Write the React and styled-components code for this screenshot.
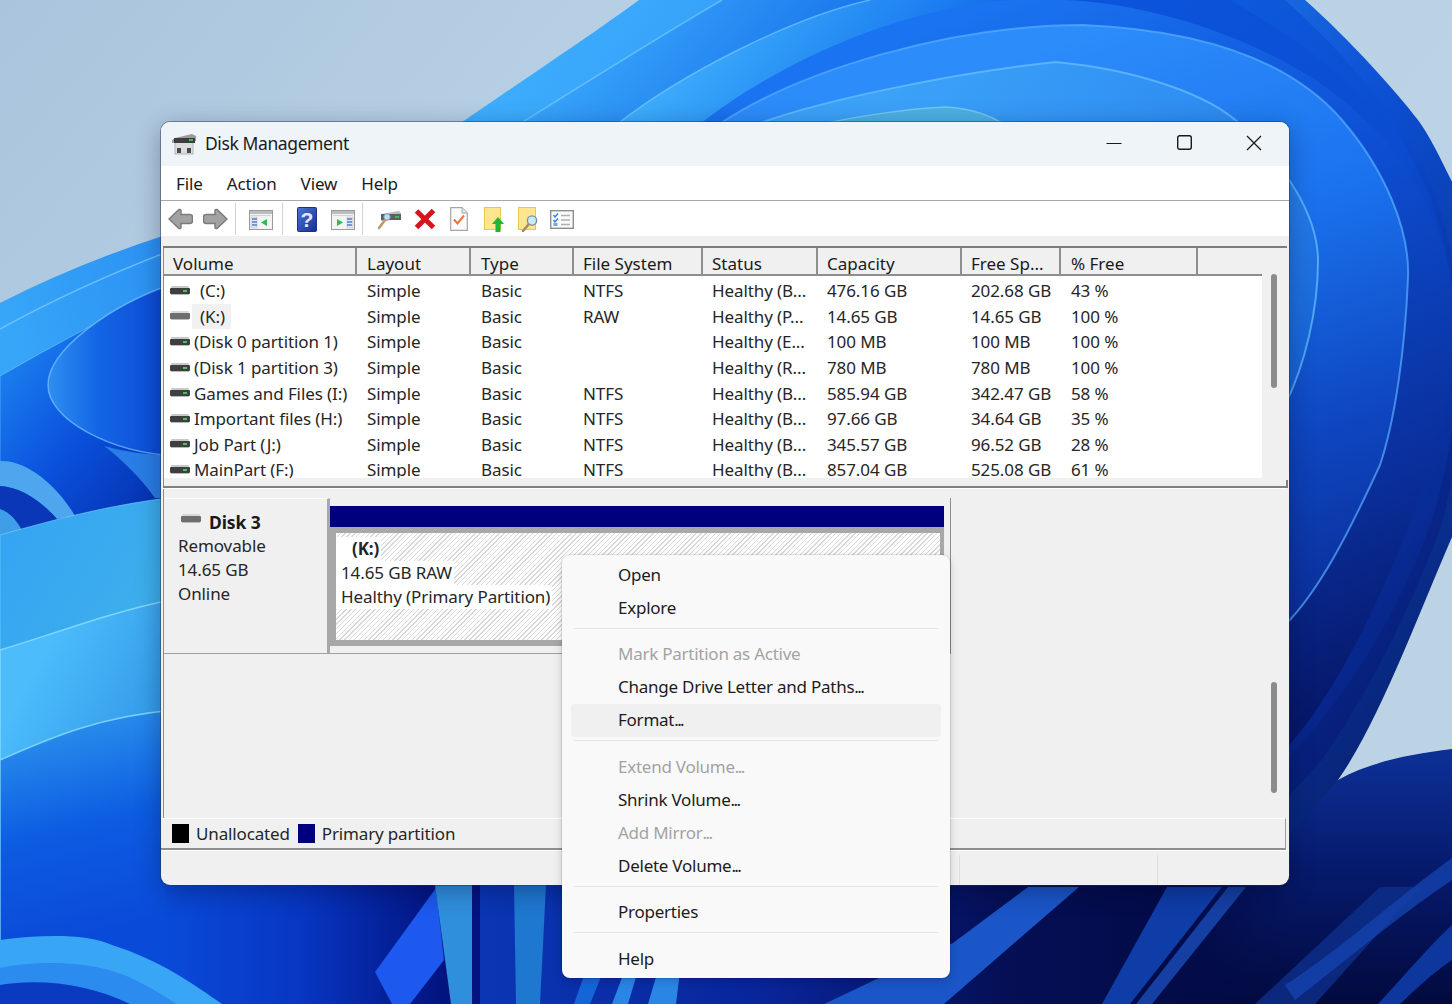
import React from 'react';
import styled, { createGlobalStyle } from 'styled-components';

const UI_FONT = '"Noto Sans", "Open Sans", sans-serif';

const GlobalStyle = createGlobalStyle`
  html, body { margin: 0; padding: 0; background: #b5cde0; }
  body { font-family: ${UI_FONT}; color: #1a1a1a; overflow: hidden; }
`;

const Desktop = styled.div`
  position: relative;
  width: 1452px;
  height: 1004px;
  overflow: hidden;
`;

const WallpaperSvg = styled.svg`
  position: absolute;
  left: 0;
  top: 0;
`;

const Window = styled.div`
  position: absolute;
  left: 161px;
  top: 122px;
  width: 1128px;
  height: 763px;
  display: flex;
  flex-direction: column;
  background: #f0f0f0;
  border-radius: 9px;
  overflow: hidden;
  box-shadow: 0 0 0 1px rgba(40, 50, 70, 0.45), 0 6px 26px rgba(0, 0, 30, 0.32);
  font-size: 17px;
`;

const TitleBar = styled.div`
  height: 41px;
  padding: 0 0 3px 11px;
  flex: none;
  display: flex;
  align-items: center;
  background: #eff4f9;

  > svg {
    margin-top: 2px;
  }
`;

const TitleText = styled.span`
  margin-left: 9px;
  font-size: 17.5px;
  letter-spacing: -0.4px;
  color: #1b1b1b;
`;

const WinButtons = styled.div`
  margin-left: auto;
  display: flex;
`;

const WinButton = styled.div`
  width: 70px;
  height: 41px;
  display: flex;
  align-items: center;
  justify-content: center;
`;

const MenuBar = styled.div`
  height: 34px;
  flex: none;
  display: flex;
  align-items: center;
  background: #fff;
  border-bottom: 1px solid #a8a8a8;
  padding-left: 15px;
  gap: 24px;
`;

const MenuLabel = styled.span`
  font-size: 17px;
  letter-spacing: -0.1px;
`;

const Toolbar = styled.div`
  height: 34px;
  padding-top: 1px;
  flex: none;
  display: flex;
  align-items: center;
  background: #fff;
`;

const ToolSlot = styled.div`
  flex: none;
  display: flex;
  margin-left: ${({ $ml }) => $ml}px;
  margin-top: ${({ $mt }) => $mt || 0}px;
`;

const ToolSep = styled.div`
  flex: none;
  width: 1px;
  height: 32px;
  margin-left: ${({ $ml }) => $ml}px;
  background: #d2d2d2;
`;

const ToolGap = styled.div`
  height: 10px;
  flex: none;
`;

const VolumePane = styled.div`
  height: 240px;
  flex: none;
  display: flex;
  margin-left: 2px;
  margin-right: 2px;
  border-top: 2px solid #7d7d7d;
  box-sizing: border-box;
`;

const VolumeMain = styled.div`
  width: 1099px;
  flex: none;
  border-left: 1px solid #8c8c8c;
  box-sizing: border-box;
`;

const TableHead = styled.div`
  height: 28px;
  display: grid;
  grid-template-columns: 193px 114px 103px 129px 115px 144px 99px 137px 1fr;
  border-bottom: 2px solid #8e8e8e;
  box-sizing: border-box;
`;

const HeadCell = styled.div`
  display: flex;
  align-items: flex-end;
  padding-left: ${({ $pad }) => $pad}px;
  box-sizing: border-box;
  border-right: ${({ $last }) => ($last ? 'none' : '2px solid #8e8e8e')};
  font-size: 17px;
  line-height: 20px;
  overflow: hidden;
  white-space: nowrap;
`;

const TableBody = styled.div`
  height: 202px;
  background: #fff;
  overflow: hidden;
  padding-top: 2px;
  box-sizing: border-box;
`;

const TableRow = styled.div`
  height: 25.6px;
  display: grid;
  grid-template-columns: 193px 114px 103px 129px 115px 144px 99px 137px 1fr;
  align-items: center;
`;

const Cell = styled.div`
  padding-left: ${({ $pad }) => $pad}px;
  white-space: nowrap;
  overflow: hidden;
  font-size: 17px;
  letter-spacing: -0.1px;
  color: #262626;
`;

const VolumeCell = styled.div`
  display: flex;
  align-items: center;
  padding-left: 6px;
  white-space: nowrap;
  font-size: 17px;
  letter-spacing: -0.1px;
  color: #262626;
`;

const VolumeName = styled.span`
  padding: 0 6px 0 ${({ $hl }) => ($hl ? 8 : 0)}px;
  margin-left: ${({ $hl, $gap }) => ($hl ? $gap - 8 : $gap)}px;
  background: ${({ $hl }) => ($hl ? '#f1f1f1' : 'transparent')};
  line-height: 25px;
`;

const ScrollTrack = styled.div`
  flex: 1;
  padding-left: 9px;
`;

const ScrollThumb = styled.div`
  width: 6px;
  height: ${({ $h }) => $h}px;
  margin-top: ${({ $top }) => $top}px;
  border-radius: 3px;
  background: #8b8b8b;
`;

const Splitter = styled.div`
  position: relative;
  height: 3px;
  flex: none;
  margin: 0 2px;
  background: #808080;
  border-bottom: 1px solid #fff;
  box-sizing: border-box;

  &::after {
    content: '';
    position: absolute;
    right: -1px;
    bottom: 0;
    width: 2px;
    height: 8px;
    background: #808080;
  }
`;

const DiskPane = styled.div`
  flex: 1;
  display: flex;
  margin: 0 2px;
  min-height: 0;
  border-left: 1px solid #8c8c8c;
`;

const DiskMain = styled.div`
  width: 1098px;
  flex: none;
  padding-top: 9px;
  box-sizing: border-box;
`;

const DiskRow = styled.div`
  width: 787px;
  height: 156px;
  display: flex;
  border-right: 1.5px solid #8c8c8c;
  border-bottom: 1.5px solid #a0a0a0;
  box-sizing: border-box;
`;

const DiskInfo = styled.div`
  width: 166px;
  flex: none;
  box-sizing: border-box;
  padding: 12px 0 0 14px;
  border-top: 1px solid #fff;
  border-right: 3px solid #a8a8a8;
  line-height: 24px;
  font-size: 17px;
  letter-spacing: -0.1px;
  color: #262626;
`;

const DiskTitle = styled.div`
  display: flex;
  align-items: center;
  height: 21px;
  padding: 0 0 2px 3px;
  font-weight: 700;
  font-size: 17.5px;
  gap: 8px;
  color: #1a1a1a;

  svg {
    margin-top: -6px;
  }
`;

const Partition = styled.div`
  width: 614px;
  padding-top: 8px;
`;

const PartitionBar = styled.div`
  height: 21px;
  background: #00007f;
`;

const PartitionFrame = styled.div`
  height: 119px;
  box-sizing: border-box;
  background: #a8a8a8;
  padding: 6px 4px 6px 6px;
`;

const Hatch = styled.div`
  height: 100%;
  box-sizing: border-box;
  padding-top: 4px;
  background: repeating-linear-gradient(-45deg, #fff 0 2.4px, #d8d8d8 2.4px 3.4px);
  line-height: 24px;
  font-size: 17px;
  letter-spacing: -0.1px;
  color: #262626;
`;

const HatchLine = styled.div`
  display: table;
  background: #fff;
  padding: 0 2px 0 ${({ $bold }) => ($bold ? 16 : 5)}px;
  font-weight: ${({ $bold }) => ($bold ? 700 : 400)};
`;

const LegendBar = styled.div`
  height: 32px;
  flex: none;
  display: flex;
  align-items: center;
  margin-right: 3px;
  padding-left: 11px;
  border-top: 1px solid #fff;
  border-bottom: 2px solid #8e8e8e;
  border-right: 1px solid #a0a0a0;
  box-sizing: border-box;
  font-size: 17px;
  letter-spacing: -0.15px;
`;

const Swatch = styled.span`
  width: 17px;
  height: 19px;
  flex: none;
  background: ${({ $color }) => $color};
  margin-right: 7px;
`;

const LegendLabel = styled.span`
  margin-right: 8px;
  color: #262626;
`;

const StatusBar = styled.div`
  height: 35px;
  flex: none;
  display: flex;
  border-top: 1px solid #fff;
  box-sizing: border-box;
`;

const StatusCell = styled.div`
  width: ${({ $w }) => $w}px;
  flex: none;
  box-sizing: border-box;
  margin-top: 4px;
  border-right: 1px solid #dedede;
`;

const ContextMenu = styled.div`
  position: absolute;
  left: 562px;
  top: 555px;
  width: 388px;
  height: 423px;
  box-sizing: border-box;
  padding: 3.5px 9px;
  background: #f9f9f9;
  border-radius: 8px;
  box-shadow: 0 0 0 1px rgba(0, 0, 0, 0.08), 0 3px 10px rgba(0, 0, 0, 0.18);
`;

const MenuItem = styled.div`
  height: 33px;
  box-sizing: border-box;
  padding: 0 0 2px 47px;
  display: flex;
  align-items: center;
  font-size: 17px;
  letter-spacing: -0.25px;
  border-radius: 4px;
  color: ${({ $disabled }) => ($disabled ? '#a3a3a3' : '#1c1c1c')};
  background: ${({ $active }) => ($active ? '#f0f0f0' : 'transparent')};
`;

const Dots = styled.span`
  letter-spacing: -1.6px;
`;

const MenuDivider = styled.div`
  height: 1px;
  margin: 3.25px 3px 9.25px;
  background: #e4e4e4;
`;

function Wallpaper() {
  return (
    <WallpaperSvg width="1452" height="1004" viewBox="0 0 1452 1004">
      <defs>
        <linearGradient id="sky" x1="0" y1="0" x2="1" y2="0.6">
          <stop offset="0" stopColor="#a9c4dc" />
          <stop offset="0.4" stopColor="#bad2e6" />
          <stop offset="1" stopColor="#bcd3e6" />
        </linearGradient>
        <linearGradient id="blob" gradientUnits="userSpaceOnUse" x1="1380" y1="760" x2="1380" y2="1004">
          <stop offset="0" stopColor="#0c2f94" />
          <stop offset="0.45" stopColor="#061a6c" />
          <stop offset="1" stopColor="#020a3e" />
        </linearGradient>
        <linearGradient id="outer" gradientUnits="userSpaceOnUse" x1="520" y1="60" x2="1420" y2="760">
          <stop offset="0" stopColor="#3dadfc" />
          <stop offset="0.3" stopColor="#2a8ef6" />
          <stop offset="0.62" stopColor="#0c4fd2" />
          <stop offset="1" stopColor="#07206f" />
        </linearGradient>
        <linearGradient id="bandA" gradientUnits="userSpaceOnUse" x1="560" y1="80" x2="1400" y2="800">
          <stop offset="0" stopColor="#37a4fa" />
          <stop offset="0.22" stopColor="#1068e8" />
          <stop offset="0.6" stopColor="#0b4cd0" />
          <stop offset="0.82" stopColor="#08288f" />
          <stop offset="1" stopColor="#06186a" />
        </linearGradient>
        <linearGradient id="bandB" gradientUnits="userSpaceOnUse" x1="680" y1="60" x2="1520" y2="780">
          <stop offset="0" stopColor="#3dacfb" />
          <stop offset="0.15" stopColor="#1a7cf0" />
          <stop offset="0.24" stopColor="#0b55dc" />
          <stop offset="0.55" stopColor="#0b4cd0" />
          <stop offset="0.8" stopColor="#08288f" />
          <stop offset="1" stopColor="#06186a" />
        </linearGradient>
        <linearGradient id="bandC" gradientUnits="userSpaceOnUse" x1="1000" y1="0" x2="1300" y2="720">
          <stop offset="0" stopColor="#1a73f0" />
          <stop offset="0.35" stopColor="#0d4fd4" />
          <stop offset="0.75" stopColor="#0a2f9c" />
          <stop offset="1" stopColor="#06186a" />
        </linearGradient>
        <linearGradient id="bandD" gradientUnits="userSpaceOnUse" x1="1100" y1="30" x2="1300" y2="640">
          <stop offset="0" stopColor="#2c8cfa" />
          <stop offset="0.35" stopColor="#1b72ee" />
          <stop offset="0.7" stopColor="#0e46c0" />
          <stop offset="1" stopColor="#0a2c96" />
        </linearGradient>
        <linearGradient id="bandE" gradientUnits="userSpaceOnUse" x1="900" y1="80" x2="1300" y2="380">
          <stop offset="0" stopColor="#3ba2f8" />
          <stop offset="0.7" stopColor="#2a86f0" />
          <stop offset="1" stopColor="#1763d8" />
        </linearGradient>
        <linearGradient id="sheetTop" gradientUnits="userSpaceOnUse" x1="0" y1="300" x2="170" y2="260">
          <stop offset="0" stopColor="#37a6f8" />
          <stop offset="1" stopColor="#2b90f2" />
        </linearGradient>
        <linearGradient id="valley" gradientUnits="userSpaceOnUse" x1="0" y1="360" x2="170" y2="500">
          <stop offset="0" stopColor="#1c82f0" />
          <stop offset="0.5" stopColor="#0a50dc" />
          <stop offset="1" stopColor="#0430ac" />
        </linearGradient>
        <linearGradient id="lobe" gradientUnits="userSpaceOnUse" x1="48" y1="380" x2="170" y2="380">
          <stop offset="0" stopColor="#2f8ff0" />
          <stop offset="0.4" stopColor="#1466e6" />
          <stop offset="1" stopColor="#0a47d2" />
        </linearGradient>
        <linearGradient id="sheetL1" gradientUnits="userSpaceOnUse" x1="0" y1="520" x2="170" y2="620">
          <stop offset="0" stopColor="#34a4f4" />
          <stop offset="1" stopColor="#3fb0ea" />
        </linearGradient>
        <linearGradient id="sheetL2" gradientUnits="userSpaceOnUse" x1="40" y1="660" x2="170" y2="730">
          <stop offset="0" stopColor="#4cbcfb" />
          <stop offset="1" stopColor="#2f96e6" />
        </linearGradient>
        <linearGradient id="sheetL3" gradientUnits="userSpaceOnUse" x1="60" y1="720" x2="110" y2="930">
          <stop offset="0" stopColor="#2a90ec" />
          <stop offset="0.5" stopColor="#0d5ce2" />
          <stop offset="1" stopColor="#0a4ad8" />
        </linearGradient>
        <linearGradient id="lowerLeft" gradientUnits="userSpaceOnUse" x1="165" y1="0" x2="440" y2="0">
          <stop offset="0" stopColor="#0a4ad8" />
          <stop offset="0.5" stopColor="#0736c2" />
          <stop offset="1" stopColor="#031480" />
        </linearGradient>
        <linearGradient id="navy" gradientUnits="userSpaceOnUse" x1="480" y1="0" x2="1290" y2="0">
          <stop offset="0" stopColor="#0a36b4" />
          <stop offset="0.35" stopColor="#08259a" />
          <stop offset="0.65" stopColor="#050f55" />
          <stop offset="0.85" stopColor="#030b48" />
          <stop offset="1" stopColor="#030b48" stopOpacity="0" />
        </linearGradient>
      </defs>

      <rect width="1452" height="1004" fill="url(#sky)" />
      <path d="M1452 749 C1410 754 1370 762 1338 780 L1180 880 L1000 880 L1000 1004 L1452 1004 Z" fill="url(#blob)" />

      {/* bloom petals, back to front */}
      <path d="M300 500 L458 125 C520 82 590 36 639 0 L1305 0 C1350 40 1395 90 1418 120 C1440 150 1452 190 1500 270 C1500 400 1480 470 1452 537 C1420 610 1380 720 1338 780 L1250 880 L300 880 Z" fill="url(#outer)" />
      <path d="M320 500 L518 125 C590 80 660 36 722 0 L1285 0 C1330 40 1370 85 1398 125 C1470 220 1478 400 1440 530 C1405 620 1370 690 1322 760 L1220 870 L320 870 Z" fill="url(#bandA)" />
      <path d="M518 125 C590 80 660 36 722 0" fill="none" stroke="#7ed0ff" strokeOpacity="0.6" strokeWidth="1.5" />
      <path d="M420 500 L616 125 C680 75 790 18 870 0 L1230 0 C1300 40 1350 80 1390 125 C1470 230 1470 400 1432 520 C1400 610 1350 690 1300 745 L1200 850 L420 850 Z" fill="url(#bandB)" />
      <path d="M616 125 C680 75 790 18 870 0" fill="none" stroke="#7ed0ff" strokeOpacity="0.6" strokeWidth="1.5" />
      <path d="M620 500 L699 125 C780 60 930 -10 1065 0 C1180 5 1310 60 1370 125 C1440 190 1470 300 1448 400 C1420 520 1350 680 1285 750 L1150 850 L620 850 Z" fill="url(#bandC)" />
      <path d="M650 500 L718 125 C800 70 950 25 1083 25 C1200 30 1290 60 1342 120 C1385 170 1410 230 1408 278 C1405 350 1395 420 1380 465 C1350 530 1320 590 1285 625 L1100 760 L650 760 Z" fill="url(#bandD)" stroke="#58aeff" strokeOpacity="0.7" strokeWidth="2" />
      <path d="M700 400 L755 125 C820 100 960 72 1056 62 C1139 70 1210 95 1241 125 C1285 165 1318 215 1318 261 C1318 310 1305 365 1285 405 L1000 560 L700 560 Z" fill="url(#bandE)" stroke="#6cc2ff" strokeOpacity="0.7" strokeWidth="2" />
      <path d="M800 300 L819 125 C860 115 917 108 945 107 C970 108 990 115 1005 125 L1010 300 Z" fill="#4cb0e4" stroke="#84d4f4" strokeOpacity="0.7" strokeWidth="1.5" />

      {/* left hand sheets */}
      <path d="M0 303 Q80 262 175 232 L175 560 L0 560 Z" fill="url(#sheetTop)" />
      <path d="M0 329 Q80 285 175 249" fill="none" stroke="#7fd0ff" strokeOpacity="0.7" strokeWidth="1.5" />
      <path d="M0 376 Q80 330 175 283 L175 520 L0 560 Z" fill="url(#valley)" stroke="#86d2ff" strokeOpacity="0.5" strokeWidth="1" />
      <path d="M175 283 C110 305 48 350 48 385 C48 420 110 452 175 456 Z" fill="url(#lobe)" stroke="#74c4ff" strokeOpacity="0.7" strokeWidth="1.5" />
      <path d="M104 446 C125 462 142 480 155 498 L175 498 L175 456 C150 455 125 452 104 446 Z" fill="#2a7de6" />
      <path d="M0 461 C30 460 60 490 75 516 L57 519 C40 500 20 487 0 486 Z" fill="#4da6ee" />
      <path d="M0 486 C20 487 40 500 57 519 L0 536 Z" fill="#0a37b8" />
      <path d="M0 509 C10 512 18 522 22 531 L0 536 Z" fill="#3f9ee8" />
      <path d="M0 535 C60 518 110 505 175 497 L175 1004 L0 1004 Z" fill="url(#sheetL1)" stroke="#8fdcff" strokeOpacity="0.5" strokeWidth="1" />
      <path d="M0 650 C60 632 110 612 175 599 L175 1004 L0 1004 Z" fill="url(#sheetL2)" stroke="#8fe0ff" strokeOpacity="0.8" strokeWidth="1.5" />
      <path d="M0 760 C50 738 100 716 175 710 L175 1004 L0 1004 Z" fill="url(#sheetL3)" stroke="#8fe0ff" strokeOpacity="0.8" strokeWidth="1.5" />

      {/* below the window */}
      <rect x="165" y="880" width="315" height="124" fill="url(#lowerLeft)" />
      <path d="M375 972 L436 888 L444 960 L410 1004 L392 1004 Z" fill="#1d59ee" />
      <path d="M0 940 C40 935 85 933 112 945 C160 960 195 985 222 1004 L0 1004 Z" fill="#38a5f5" />
      <path d="M0 968 C40 960 100 960 139 982 C155 990 168 998 176 1004 L0 1004 Z" fill="#2b8bee" />
      <path d="M0 985 C40 978 90 984 130 1004 L0 1004 Z" fill="#0a3ac0" />
      <rect x="480" y="880" width="810" height="124" fill="url(#navy)" />
      <path d="M435 885 L472 885 L472 1004 L451 1004 Z" fill="#2f8fdc" />
      <path d="M514 885 L546 885 L540 1004 L516 1004 Z" fill="#1e78d0" />
      <path d="M574 1004 L600 930 L620 930 L590 1004 Z" fill="#1466d8" />
      <path d="M612 1004 L640 930 L650 930 L628 1004 Z" fill="#2a86e4" />
      <path d="M648 1004 L670 930 L685 930 L676 1004 Z" fill="#2a86e4" />
      <path d="M824 1004 L953 943 L1028 887 L1079 887 L944 1004 Z" fill="#1a56c8" />
      <path d="M1102 1004 L1167 887 L1222 887 L1130 1004 Z" fill="#0f3da8" />
      <path d="M1136 1004 L1228 887 L1246 887 L1152 1004 Z" fill="#153fa2" />
      <path d="M1255 1004 L1380 887 L1420 887 L1315 1004 Z" fill="#0d2e88" opacity="0.85" />
      <path d="M1285 985 C1340 950 1400 895 1452 858 L1452 880 C1400 915 1340 965 1295 1000 Z" fill="#1442ae" opacity="0.8" />
      <path d="M1378 1004 C1405 975 1430 945 1452 925 L1452 960 C1430 975 1415 990 1400 1004 Z" fill="#0d379c" />
    </WallpaperSvg>
  );
}

const AppIcon = () => (
  <svg width="24" height="22" viewBox="0 0 24 22">
    <rect x="3" y="9" width="18" height="12" fill="#dcdcdc" stroke="#b4b4b4" />
    <rect x="5" y="15" width="4" height="5" fill="#4a4a4a" />
    <rect x="15" y="15" width="4" height="5" fill="#4a4a4a" />
    <path d="M3 5 L20 1 L24 3 L24 8 L0 10 L0 7 Z" fill="#9b9b9b" />
    <rect x="2" y="5" width="21" height="5" fill="#3d3d3d" />
    <rect x="17" y="6" width="4" height="2" fill="#2fc24d" />
  </svg>
);

const DriveIcon = ({ removable }) => (
  <svg width="20" height="10" viewBox="0 0 20 10">
    <rect x="1" y="0" width="18" height="2" rx="1" fill={removable ? '#d8d8d8' : '#c8c8c8'} />
    <rect x="0" y="2" width="20" height="6" rx="1" fill={removable ? '#6e6e6e' : '#3f3f3f'} />
    {!removable && <rect x="13" y="4" width="4" height="2" fill="#3ecb4f" />}
    <rect x="1" y="8" width="18" height="1" fill="#b9b9b9" />
  </svg>
);

const BackIcon = ({ flip }) => (
  <svg width="25" height="22" viewBox="0 0 25 22" style={flip ? { transform: 'scaleX(-1)' } : undefined}>
    <path d="M1 11 L11 1.5 Q13 1 13 3 L13 6.5 L22 6.5 Q24.5 6.5 24.5 9 L24.5 13 Q24.5 15.5 22 15.5 L13 15.5 L13 19 Q13 21 11 20.5 Z" fill="#a2a2a2" stroke="#7c7c7c" strokeWidth="1.5" />
  </svg>
);

const PanelIcon = ({ right }) => (
  <svg width="24" height="20" viewBox="0 0 24 20">
    <rect x="0.5" y="0.5" width="23" height="19" fill="#f4f4f4" stroke="#9a9a9a" />
    <rect x="1" y="1" width="22" height="3" fill="#bcbcbc" />
    <rect x="2" y="5" width="20" height="1" fill="#d4d4d4" />
    <rect x={right ? 16 : 2} y="7" width="6" height="11" fill="#e2e6ee" stroke="#b0b6c2" strokeWidth="0.5" />
    <path d={right ? 'M16 9h5M16 12h5M16 15h5' : 'M3 9h5M3 12h5M3 15h5'} stroke="#5a7fc4" strokeWidth="1.5" />
    <path d={right ? 'M6 9 L12 12.5 L6 16 Z' : 'M18 9 L12 12.5 L18 16 Z'} fill="#2dbb52" />
  </svg>
);

const HelpIcon = () => (
  <svg width="20" height="25" viewBox="0 0 20 25">
    <defs>
      <linearGradient id="helpFill" x1="0" y1="0" x2="1" y2="1">
        <stop offset="0" stopColor="#4f74d8" />
        <stop offset="1" stopColor="#142e92" />
      </linearGradient>
    </defs>
    <rect x="0.5" y="0.5" width="19" height="24" rx="1" fill="url(#helpFill)" stroke="#1d2f86" />
    <text x="10" y="20" textAnchor="middle" fontFamily='"Liberation Sans", sans-serif' fontWeight="700" fontSize="21" fill="#e4e8ff">?</text>
  </svg>
);

const DriveSearchIcon = () => (
  <svg width="23" height="22" viewBox="0 0 23 22">
    <path d="M3 6 L21 3 L23 5 L23 11 L3 13 Z" fill="#bdbdbd" />
    <rect x="3" y="6" width="20" height="6" fill="#596066" />
    <rect x="17" y="8" width="4" height="2" fill="#2fc24d" />
    <circle cx="9" cy="9" r="3.2" fill="#bfe0f4" stroke="#7d97ad" />
    <path d="M7 12 L1 20" stroke="#c09a66" strokeWidth="2.6" strokeLinecap="round" />
  </svg>
);

const DeleteIcon = () => (
  <svg width="22" height="22" viewBox="0 0 22 22">
    <path d="M2.5 3 L19.5 19.5 M19.5 2.5 L2.5 19.5" stroke="#d5141c" strokeWidth="5" />
  </svg>
);

const CheckDocIcon = () => (
  <svg width="18" height="24" viewBox="0 0 18 24">
    <path d="M0.7 0.7 H12 L17.3 6 V23.3 H0.7 Z" fill="#fbfbfb" stroke="#a6a6a6" strokeWidth="1.2" />
    <path d="M12 0.7 V6 H17.3" fill="#e6e6e6" stroke="#a6a6a6" />
    <path d="M4 12.5 L7.5 16.5 L14 8.5" fill="none" stroke="#f0713a" strokeWidth="2" />
  </svg>
);

const UpFolderIcon = () => (
  <svg width="20" height="25" viewBox="0 0 20 25">
    <rect x="0.5" y="0.5" width="16" height="22" fill="#fde68e" stroke="#e9c64e" />
    <path d="M14 10 L20 17 L16.5 17 L16.5 25 L11.5 25 L11.5 17 L8 17 Z" fill="#22b534" />
  </svg>
);

const FindFolderIcon = () => (
  <svg width="21" height="25" viewBox="0 0 21 25">
    <rect x="0.5" y="0.5" width="17" height="22" fill="#fde68e" stroke="#e9c64e" />
    <circle cx="14" cy="13.5" r="4.6" fill="#cfe8f6" stroke="#6b93b0" strokeWidth="1.4" />
    <path d="M10.5 17.5 L5 24" stroke="#a88a62" strokeWidth="2.6" strokeLinecap="round" />
  </svg>
);

const ChecklistIcon = () => (
  <svg width="24" height="19" viewBox="0 0 24 19">
    <rect x="0.7" y="0.7" width="22.6" height="17.6" fill="#fafafa" stroke="#8e8e8e" strokeWidth="1.4" />
    <path d="M3.5 5 L5 7 L8 3.5 M3.5 10 L5 12 L8 8.5" fill="none" stroke="#2f7fe0" strokeWidth="1.4" />
    <rect x="3.5" y="13" width="4" height="3" fill="#6fa7ea" />
    <path d="M11 5.5 H20 M11 10 H20 M11 14.5 H20" stroke="#b0b0b0" strokeWidth="1.4" />
  </svg>
);

const columns = [
  { label: 'Volume', pad: 9 },
  { label: 'Layout', pad: 10 },
  { label: 'Type', pad: 10 },
  { label: 'File System', pad: 9 },
  { label: 'Status', pad: 9 },
  { label: 'Capacity', pad: 9 },
  { label: 'Free Sp...', pad: 9 },
  { label: '% Free', pad: 10 },
  { label: '', pad: 0 },
];

const volumes = [
  { name: '(C:)', gap: 10, layout: 'Simple', type: 'Basic', fs: 'NTFS', status: 'Healthy (B...', cap: '476.16 GB', free: '202.68 GB', pct: '43 %' },
  { name: '(K:)', gap: 10, hl: true, removable: true, layout: 'Simple', type: 'Basic', fs: 'RAW', status: 'Healthy (P...', cap: '14.65 GB', free: '14.65 GB', pct: '100 %' },
  { name: '(Disk 0 partition 1)', gap: 4, layout: 'Simple', type: 'Basic', fs: '', status: 'Healthy (E...', cap: '100 MB', free: '100 MB', pct: '100 %' },
  { name: '(Disk 1 partition 3)', gap: 4, layout: 'Simple', type: 'Basic', fs: '', status: 'Healthy (R...', cap: '780 MB', free: '780 MB', pct: '100 %' },
  { name: 'Games and Files (I:)', gap: 4, layout: 'Simple', type: 'Basic', fs: 'NTFS', status: 'Healthy (B...', cap: '585.94 GB', free: '342.47 GB', pct: '58 %' },
  { name: 'Important files (H:)', gap: 4, layout: 'Simple', type: 'Basic', fs: 'NTFS', status: 'Healthy (B...', cap: '97.66 GB', free: '34.64 GB', pct: '35 %' },
  { name: 'Job Part (J:)', gap: 4, layout: 'Simple', type: 'Basic', fs: 'NTFS', status: 'Healthy (B...', cap: '345.57 GB', free: '96.52 GB', pct: '28 %' },
  { name: 'MainPart (F:)', gap: 4, layout: 'Simple', type: 'Basic', fs: 'NTFS', status: 'Healthy (B...', cap: '857.04 GB', free: '525.08 GB', pct: '61 %' },
];

const menuGroups = [
  [{ label: 'Open' }, { label: 'Explore' }],
  [
    { label: 'Mark Partition as Active', disabled: true },
    { label: 'Change Drive Letter and Paths', dots: true },
    { label: 'Format', dots: true, active: true },
  ],
  [
    { label: 'Extend Volume', dots: true, disabled: true },
    { label: 'Shrink Volume', dots: true },
    { label: 'Add Mirror', dots: true, disabled: true },
    { label: 'Delete Volume', dots: true },
  ],
  [{ label: 'Properties' }],
  [{ label: 'Help' }],
];

export default function App() {
  return (
    <Desktop>
      <GlobalStyle />
      <Wallpaper />
      <Window>
        <TitleBar>
          <AppIcon />
          <TitleText>Disk Management</TitleText>
          <WinButtons>
            <WinButton>
              <svg width="16" height="16" viewBox="0 0 16 16"><path d="M0.5 8.5 H15.5" stroke="#1a1a1a" strokeWidth="1.2" /></svg>
            </WinButton>
            <WinButton>
              <svg width="15" height="15" viewBox="0 0 15 15"><rect x="0.7" y="0.7" width="13.6" height="13.6" rx="2" fill="none" stroke="#1a1a1a" strokeWidth="1.4" /></svg>
            </WinButton>
            <WinButton>
              <svg width="16" height="16" viewBox="0 0 16 16"><path d="M1 1 L15 15 M15 1 L1 15" stroke="#1a1a1a" strokeWidth="1.3" /></svg>
            </WinButton>
          </WinButtons>
        </TitleBar>

        <MenuBar>
          <MenuLabel>File</MenuLabel>
          <MenuLabel>Action</MenuLabel>
          <MenuLabel>View</MenuLabel>
          <MenuLabel>Help</MenuLabel>
        </MenuBar>

        <Toolbar>
          <ToolSlot $ml={7}><BackIcon /></ToolSlot>
          <ToolSlot $ml={10}><BackIcon flip /></ToolSlot>
          <ToolSep $ml={7} />
          <ToolSlot $ml={13} $mt={2}><PanelIcon /></ToolSlot>
          <ToolSep $ml={9} />
          <ToolSlot $ml={14}><HelpIcon /></ToolSlot>
          <ToolSlot $ml={14} $mt={2}><PanelIcon right /></ToolSlot>
          <ToolSep $ml={7} />
          <ToolSlot $ml={15}><DriveSearchIcon /></ToolSlot>
          <ToolSlot $ml={13}><DeleteIcon /></ToolSlot>
          <ToolSlot $ml={14}><CheckDocIcon /></ToolSlot>
          <ToolSlot $ml={16}><UpFolderIcon /></ToolSlot>
          <ToolSlot $ml={14}><FindFolderIcon /></ToolSlot>
          <ToolSlot $ml={11}><ChecklistIcon /></ToolSlot>
        </Toolbar>
        <ToolGap />

        <VolumePane>
          <VolumeMain>
            <TableHead>
              {columns.map((c, i) => (
                <HeadCell key={i} $pad={c.pad} $last={i === columns.length - 1}>{c.label}</HeadCell>
              ))}
            </TableHead>
            <TableBody>
              {volumes.map((v) => (
                <TableRow key={v.name}>
                  <VolumeCell>
                    <DriveIcon removable={v.removable} />
                    <VolumeName $gap={v.gap} $hl={v.hl}>{v.name}</VolumeName>
                  </VolumeCell>
                  <Cell $pad={10}>{v.layout}</Cell>
                  <Cell $pad={10}>{v.type}</Cell>
                  <Cell $pad={9}>{v.fs}</Cell>
                  <Cell $pad={9}>{v.status}</Cell>
                  <Cell $pad={9}>{v.cap}</Cell>
                  <Cell $pad={9}>{v.free}</Cell>
                  <Cell $pad={10}>{v.pct}</Cell>
                </TableRow>
              ))}
            </TableBody>
          </VolumeMain>
          <ScrollTrack>
            <ScrollThumb $top={26} $h={114} />
          </ScrollTrack>
        </VolumePane>
        <Splitter />

        <DiskPane>
          <DiskMain>
            <DiskRow>
              <DiskInfo>
                <DiskTitle><DriveIcon removable />Disk 3</DiskTitle>
                <div>Removable</div>
                <div>14.65 GB</div>
                <div>Online</div>
              </DiskInfo>
              <Partition>
                <PartitionBar />
                <PartitionFrame>
                  <Hatch>
                    <HatchLine $bold>(K:)</HatchLine>
                    <HatchLine>14.65 GB RAW</HatchLine>
                    <HatchLine>Healthy (Primary Partition)</HatchLine>
                  </Hatch>
                </PartitionFrame>
              </Partition>
            </DiskRow>
          </DiskMain>
          <ScrollTrack>
            <ScrollThumb $top={193} $h={111} />
          </ScrollTrack>
        </DiskPane>

        <LegendBar>
          <Swatch $color="#000" />
          <LegendLabel>Unallocated</LegendLabel>
          <Swatch $color="#00007f" />
          <LegendLabel>Primary partition</LegendLabel>
        </LegendBar>
        <StatusBar>
          <StatusCell $w={799} />
          <StatusCell $w={198} />
        </StatusBar>
      </Window>

      <ContextMenu>
        {menuGroups.map((group, i) => (
          <React.Fragment key={i}>
            {i > 0 && <MenuDivider />}
            {group.map((item) => (
              <MenuItem key={item.label} $disabled={item.disabled} $active={item.active}>
                {item.label}
                {item.dots && <Dots>...</Dots>}
              </MenuItem>
            ))}
          </React.Fragment>
        ))}
      </ContextMenu>
    </Desktop>
  );
}
